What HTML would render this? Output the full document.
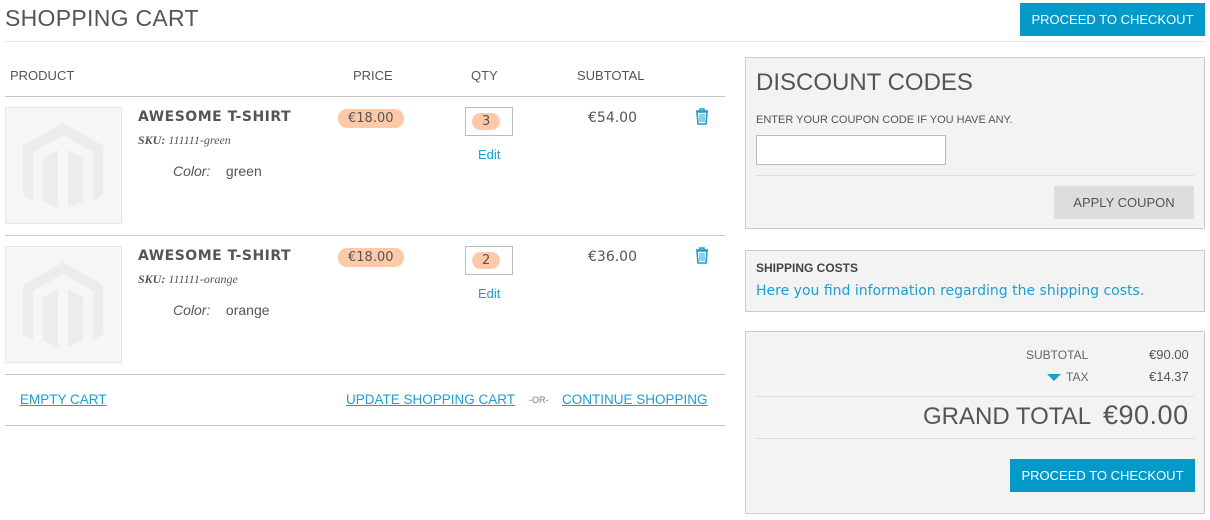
<!DOCTYPE html>
<html><head><meta charset="utf-8"><style>
body{margin:0;width:1210px;height:520px;background:#fff;font-family:"Liberation Sans",sans-serif;color:#555;position:relative;overflow:hidden}
.a{position:absolute;white-space:nowrap}
.btn{position:absolute;background:#0399c9;color:#fff;font-size:13px;text-align:center}
.line{position:absolute;height:1px;background:#c8c8c8}
.box{position:absolute;background:#f3f3f3;border:1px solid #ccc;box-sizing:border-box}
.img{position:absolute;width:117px;height:117px;background:#f6f6f6;border:1px solid #e6e6e6;box-sizing:border-box}
.name{font-family:"DejaVu Sans",sans-serif;font-weight:bold;font-size:14px;color:#555;letter-spacing:.5px}
.sku{font-family:"Liberation Serif",serif;font-style:italic;font-size:12px;color:#555}
.pill{background:#fdc9a9;border-radius:9px;padding:2px 10px;font-family:"DejaVu Sans",sans-serif;font-size:13px;color:#555}
.qty{position:absolute;width:48px;height:29px;border:1px solid #bbb;box-sizing:border-box;background:#fff}
.link{color:#1a9fd0;text-decoration:underline;font-size:13.5px}
</style></head><body>
<div class="a" style="left:5px;top:5px;font-size:23px;color:#555;letter-spacing:.3px">SHOPPING CART</div>
<div class="btn" style="left:1020px;top:3px;width:185px;height:33px;line-height:33px">PROCEED TO CHECKOUT</div>
<div class="line" style="left:5px;top:41px;width:1200px;background:#e6e6e6"></div>

<div class="a" style="left:10px;top:68px;font-size:13px">PRODUCT</div>
<div class="a" style="left:353px;top:68px;font-size:13px">PRICE</div>
<div class="a" style="left:471px;top:68px;font-size:13px">QTY</div>
<div class="a" style="left:577px;top:68px;font-size:13px">SUBTOTAL</div>
<div class="line" style="left:5px;top:96px;width:720px"></div>

<!-- row 1 -->
<div class="img" style="left:5px;top:107px"><svg width="115" height="115" viewBox="0 0 115 115"><path d="M57 15 L97 38 L97 87 L87 93 L87 44 L57 27 L27 44 L27 93 L17 87 L17 38Z M37 50 L52 42 L52 100 L37 93Z M62 42 L77 50 L77 93 L62 100Z" fill="#ececec"/></svg></div>
<div class="a name" style="left:138px;top:109px">AWESOME T-SHIRT</div>
<div class="a sku" style="left:138px;top:133px"><b>SKU:</b> 111111-green</div>
<div class="a" style="left:173px;top:163px;font-size:14px"><i>Color:</i>&nbsp;&nbsp;&nbsp; green</div>
<div class="a pill" style="left:338px;top:109px">€18.00</div>
<div class="qty" style="left:465px;top:107px"><span class="a pill" style="left:6px;top:5px;padding:1px 10px">3</span></div>
<div class="a" style="left:478px;top:147px;font-size:13px;color:#1a9fd0">Edit</div>
<div class="a" style="left:588px;top:110px;font-family:'DejaVu Sans',sans-serif;font-size:14px">€54.00</div>
<svg class="a" style="left:695px;top:108px" width="14" height="17" viewBox="0 0 14 17"><path d="M1 3h12M5 3V1h4v2M2 4h10l-1 12H3z" fill="none" stroke="#1a9fd0" stroke-width="1.6"/><path d="M5 6v8M7 6v8M9 6v8" stroke="#1a9fd0"/></svg>
<div class="line" style="left:5px;top:235px;width:720px"></div>

<!-- row 2 -->
<div class="img" style="left:5px;top:246px"><svg width="115" height="115" viewBox="0 0 115 115"><path d="M57 15 L97 38 L97 87 L87 93 L87 44 L57 27 L27 44 L27 93 L17 87 L17 38Z M37 50 L52 42 L52 100 L37 93Z M62 42 L77 50 L77 93 L62 100Z" fill="#ececec"/></svg></div>
<div class="a name" style="left:138px;top:248px">AWESOME T-SHIRT</div>
<div class="a sku" style="left:138px;top:272px"><b>SKU:</b> 111111-orange</div>
<div class="a" style="left:173px;top:302px;font-size:14px"><i>Color:</i>&nbsp;&nbsp;&nbsp; orange</div>
<div class="a pill" style="left:338px;top:248px">€18.00</div>
<div class="qty" style="left:465px;top:246px"><span class="a pill" style="left:6px;top:5px;padding:1px 10px">2</span></div>
<div class="a" style="left:478px;top:286px;font-size:13px;color:#1a9fd0">Edit</div>
<div class="a" style="left:588px;top:249px;font-family:'DejaVu Sans',sans-serif;font-size:14px">€36.00</div>
<svg class="a" style="left:695px;top:247px" width="14" height="17" viewBox="0 0 14 17"><path d="M1 3h12M5 3V1h4v2M2 4h10l-1 12H3z" fill="none" stroke="#1a9fd0" stroke-width="1.6"/><path d="M5 6v8M7 6v8M9 6v8" stroke="#1a9fd0"/></svg>
<div class="line" style="left:5px;top:374px;width:720px"></div>

<div class="a link" style="left:20px;top:392px">EMPTY CART</div>
<div class="a link" style="left:346px;top:392px">UPDATE SHOPPING CART</div>
<div class="a" style="left:529px;top:395px;font-size:9px;color:#777">-OR-</div>
<div class="a link" style="left:562px;top:392px">CONTINUE SHOPPING</div>
<div class="line" style="left:5px;top:425px;width:720px"></div>

<!-- discount -->
<div class="box" style="left:745px;top:57px;width:460px;height:172px">
<div class="a" style="left:10px;top:11px;font-size:24px;color:#555">DISCOUNT CODES</div>
<div class="a" style="left:10px;top:56px;font-size:11px">ENTER YOUR COUPON CODE IF YOU HAVE ANY.</div>
<div class="a" style="left:10px;top:77px;width:190px;height:30px;background:#fff;border:1px solid #bbb;box-sizing:border-box"></div>
<div class="a" style="left:10px;top:117px;width:438px;height:1px;background:#e0e0e0"></div>
<div class="a" style="left:308px;top:128px;width:140px;height:33px;line-height:33px;text-align:center;background:#ddd;color:#555;font-size:13px">APPLY COUPON</div>
</div>

<!-- shipping -->
<div class="box" style="left:745px;top:250px;width:460px;height:62px">
<div class="a" style="left:10px;top:10px;font-size:12px;font-weight:bold;color:#444">SHIPPING COSTS</div>
<div class="a" style="left:10px;top:32px;font-family:'DejaVu Sans',sans-serif;font-size:14px;color:#1a9fd0">Here you find information regarding the shipping costs.</div>
</div>

<!-- totals -->
<div class="box" style="left:745px;top:331px;width:460px;height:183px">
<div class="a" style="left:280px;top:16px;font-size:12px;color:#666">SUBTOTAL</div>
<div class="a" style="left:403px;top:15px;font-size:13px;color:#555">€90.00</div>
<div class="a" style="left:301px;top:42px;width:0;height:0;border-left:7px solid transparent;border-right:7px solid transparent;border-top:7px solid #1a9fd0"></div>
<div class="a" style="left:320px;top:38px;font-size:12px;color:#666">TAX</div>
<div class="a" style="left:403px;top:37px;font-size:13px;color:#555">€14.37</div>
<div class="a" style="left:10px;top:64px;width:438px;height:1px;background:#ddd"></div>
<div class="a" style="left:177px;top:71px;font-size:24px;color:#555">GRAND TOTAL</div>
<div class="a" style="left:357px;top:68px;font-size:27px;color:#555;font-family:'Liberation Sans',sans-serif;letter-spacing:.5px">€90.00</div>
<div class="a" style="left:10px;top:106px;width:438px;height:1px;background:#ddd"></div>
<div class="btn" style="left:264px;top:127px;width:185px;height:33px;line-height:33px">PROCEED TO CHECKOUT</div>
</div>
</body></html>
